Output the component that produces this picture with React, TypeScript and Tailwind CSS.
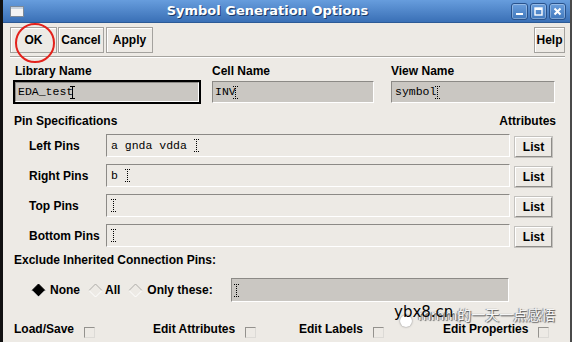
import React from "react";

const LABEL =
  "font-['Liberation_Sans',Arial,sans-serif] font-bold text-[12px] leading-[14px] text-black whitespace-nowrap";
const MONO =
  "font-['Liberation_Mono','DejaVu_Sans_Mono',monospace] text-[11.5px] leading-[14px] text-black whitespace-pre";
const SUNKEN =
  "border border-t-[#8c8a86] border-l-[#8c8a86] border-b-white border-r-white";

function IBeam({ dotted = true }: { dotted?: boolean }) {
  const dash = dotted ? "1 1" : undefined;
  return (
    <svg width="5" height="13" viewBox="0 0 5 13" className="shrink-0">
      <path d="M0 0.5H5M0 12.5H5" stroke="#000" strokeWidth="1" strokeDasharray={dash} fill="none" />
      <path d="M2.5 0V13" stroke="#000" strokeWidth="1" strokeDasharray={dash} fill="none" />
    </svg>
  );
}

function ToolButton({ children, className = "" }: { children: React.ReactNode; className?: string }) {
  return (
    <div
      className={
        "h-[26px] flex items-center justify-center border border-[#a4a29e] shadow-[inset_1px_1px_0_#ffffff] bg-[#edeae5] " +
        LABEL +
        " " +
        className
      }
    >
      {children}
    </div>
  );
}

function WinBtn({ children }: { children: React.ReactNode }) {
  return (
    <div className="w-[17px] h-[17px] rounded-[3px] border border-[#28528c] bg-gradient-to-b from-[#6a9edc] to-[#4078bd] shadow-[inset_0_0_0_1px_rgba(255,255,255,0.3)] flex items-center justify-center">
      {children}
    </div>
  );
}

function Diamond({ filled = false }: { filled?: boolean }) {
  return (
    <svg width="15" height="15" viewBox="0 0 15 15" className="shrink-0">
      {filled && <polygon points="7.5,1 14,7.5 7.5,14 1,7.5" fill="#000" />}
      <path d="M1 7.5L7.5 1L14 7.5" stroke={filled ? "#000" : "#aeaca8"} strokeWidth="1" fill="none" />
      <path d="M1 7.5L7.5 14L14 7.5" stroke="#ffffff" strokeWidth="1" fill="none" />
    </svg>
  );
}

function Check() {
  return (
    <span className="mt-[5px] ml-[10px] w-[11px] h-[11px] border border-t-[#94928e] border-l-[#94928e] border-b-[#dcdad6] border-r-[#dcdad6] bg-[#edeae5] shrink-0" />
  );
}

const pinRows = [
  { label: "Left Pins", value: "a gnda vdda " },
  { label: "Right Pins", value: "b " },
  { label: "Top Pins", value: "" },
  { label: "Bottom Pins", value: "" },
];

export default function App() {
  return (
    <div className="relative w-[572px] h-[342px] overflow-hidden flex flex-col bg-[#edeae5] border-l-[3px] border-l-[#111111] border-r-[2px] border-r-[#4a4a4a]">
      {/* Title bar */}
      <div className="h-[23px] shrink-0 flex items-center bg-gradient-to-b from-[#679ddd] to-[#3a70b6] border-b border-b-[#2c5a96]">
        <div className="ml-[7px] w-[14px] h-[11px] bg-[#f4f4f4] border border-[#7d8a99] shadow-[inset_0_2px_0_#c9d3de]" />
        <div className="flex-1 text-center font-['DejaVu_Sans',sans-serif] font-bold text-[13px] leading-[16px] text-white [text-shadow:1px_1px_0_#1d3b66]">
          Symbol Generation Options
        </div>
        <div className="flex gap-[2px] mr-[4px]">
          <WinBtn>
            <svg width="9" height="9" viewBox="0 0 9 9">
              <rect x="1" y="6" width="7" height="2" fill="#fff" />
            </svg>
          </WinBtn>
          <WinBtn>
            <svg width="9" height="9" viewBox="0 0 9 9">
              <rect x="1" y="1" width="7" height="7" fill="none" stroke="#fff" strokeWidth="1.4" />
              <rect x="1" y="1" width="7" height="2" fill="#fff" />
            </svg>
          </WinBtn>
          <WinBtn>
            <svg width="9" height="9" viewBox="0 0 9 9">
              <path d="M1.5 1.5L7.5 7.5M7.5 1.5L1.5 7.5" stroke="#fff" strokeWidth="2" />
            </svg>
          </WinBtn>
        </div>
      </div>

      {/* Toolbar */}
      <div className="flex items-center pt-[4px] pl-[7px] pr-[5px]">
        <ToolButton className="w-[47px]">OK</ToolButton>
        <ToolButton className="w-[46px] ml-[1px]">Cancel</ToolButton>
        <ToolButton className="w-[47px] ml-[2px]">Apply</ToolButton>
        <div className="flex-1" />
        <ToolButton className="w-[31px]">Help</ToolButton>
      </div>
      <div className="ml-[7px] mr-[5px] mt-[3px] border-t border-t-[#a6a49f] border-b border-b-white" />

      {/* Names */}
      <div className="flex pl-[10px] mt-[6px]">
        <div className="w-[188px] flex flex-col">
          <div className={LABEL + " pl-[2px]"}>Library Name</div>
          <div className="mt-[2px] h-[24px] border-2 border-black">
            <div className={"h-full bg-[#cac7c2] flex items-center pl-[2px] " + SUNKEN}>
              <span className={MONO}>EDA_tes</span>
              <span className={MONO + " -mr-[3px]"}>t</span>
              <IBeam dotted={false} />
            </div>
          </div>
        </div>
        <div className="w-[162px] ml-[11px] flex flex-col">
          <div className={LABEL}>Cell Name</div>
          <div className={"mt-[3px] h-[22px] bg-[#cac7c2] flex items-center pl-[2px] " + SUNKEN}>
            <span className={MONO + " -mr-[3px]"}>INV</span>
            <IBeam />
          </div>
        </div>
        <div className="w-[164px] ml-[17px] flex flex-col">
          <div className={LABEL}>View Name</div>
          <div className={"mt-[3px] h-[22px] bg-[#cac7c2] flex items-center pl-[3px] " + SUNKEN}>
            <span className={MONO + " -mr-[1px]"}>symbol</span>
            <IBeam />
          </div>
        </div>
      </div>

      {/* Pin specifications header */}
      <div className="flex justify-between pl-[11px] pr-[14px] mt-[10px]">
        <div className={LABEL}>Pin Specifications</div>
        <div className={LABEL}>Attributes</div>
      </div>

      {/* Pin rows */}
      <div className="flex flex-col gap-[7px] mt-[6px] pl-[26px]">
        {pinRows.map((r) => (
          <div key={r.label} className="flex items-start h-[23px]">
            <div className={LABEL + " w-[77px] self-center"}>{r.label}</div>
            <div className={"w-[404px] h-[23px] flex items-center pl-[4px] " + SUNKEN}>
              {r.value && <span className={MONO}>{r.value}</span>}
              <IBeam />
            </div>
            <div
              className={
                "ml-[5px] mt-[3px] w-[37px] h-[20px] flex items-center justify-center border border-t-white border-l-white border-b-[#8f8d89] border-r-[#8f8d89] outline outline-1 outline-[#c4c2be] " +
                LABEL
              }
            >
              List
            </div>
          </div>
        ))}
      </div>

      {/* Exclude */}
      <div className={LABEL + " pl-[11px] mt-[6px]"}>Exclude Inherited Connection Pins:</div>
      <div className="flex items-center mt-[11px] h-[24px] pl-[28px]">
        <div className="w-[200px] flex items-center">
          <Diamond filled />
          <span className={LABEL + " ml-[4px]"}>None</span>
          <span className="ml-[8px] flex">
            <Diamond />
          </span>
          <span className={LABEL + " ml-[2px]"}>All</span>
          <span className="ml-[8px] flex">
            <Diamond />
          </span>
          <span className={LABEL + " ml-[4px]"}>Only these:</span>
        </div>
        <div className={"w-[278px] h-[24px] bg-[#cac7c2] flex items-center pl-[2px] " + SUNKEN}>
          <IBeam />
        </div>
      </div>

      {/* Bottom options */}
      <div className="flex items-start mt-[20px] pl-[11px]">
        <div className="w-[139px] flex items-start">
          <span className={LABEL}>Load/Save</span>
          <Check />
        </div>
        <div className="w-[146px] flex items-start">
          <span className={LABEL}>Edit Attributes</span>
          <Check />
        </div>
        <div className="w-[144px] flex items-start">
          <span className={LABEL}>Edit Labels</span>
          <Check />
        </div>
        <div className="flex items-start">
          <span className={LABEL}>Edit Properties</span>
          <Check />
        </div>
      </div>

      {/* Red annotation circle around OK */}
      <div className="absolute left-[12px] top-[23px] w-[40px] h-[40px] rounded-full border-2 border-[#e3221c]" />

      {/* Watermark */}
      <div className="absolute left-[397px] top-[315px] w-[12px] h-[12px] rounded-full bg-white shadow-[0_0_2px_#777]" />
      <div className="absolute left-[415px] top-[307px] font-['Noto_Sans','Noto_Sans_CJK_SC',sans-serif] text-[14px] leading-[16px] text-[#f6f6f6] whitespace-nowrap [text-shadow:1px_1px_1px_#555,-1px_0_1px_#777]">
        mmm的一天一点感悟
      </div>
      <div className="absolute left-[391px] top-[304px] font-['DejaVu_Sans',sans-serif] text-[15px] leading-[16px] text-black whitespace-nowrap">
        ybx8.cn
      </div>
    </div>
  );
}
